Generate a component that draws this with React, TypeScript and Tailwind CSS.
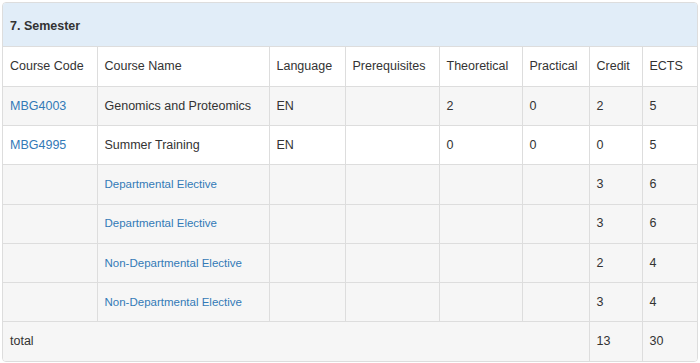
import React from 'react';

interface Course {
  code?: string;
  name: string;
  elective?: boolean;
  lang?: string;
  theo?: string;
  prac?: string;
  credit: string;
  ects: string;
  striped: boolean;
}

const courses: Course[] = [
  { code: 'MBG4003', name: 'Genomics and Proteomics', lang: 'EN', theo: '2', prac: '0', credit: '2', ects: '5', striped: true },
  { code: 'MBG4995', name: 'Summer Training', lang: 'EN', theo: '0', prac: '0', credit: '0', ects: '5', striped: false },
  { name: 'Departmental Elective', elective: true, credit: '3', ects: '6', striped: true },
  { name: 'Departmental Elective', elective: true, credit: '3', ects: '6', striped: true },
  { name: 'Non-Departmental Elective', elective: true, credit: '2', ects: '4', striped: true },
  { name: 'Non-Departmental Elective', elective: true, credit: '3', ects: '4', striped: true },
];

const headers = ['Course Code', 'Course Name', 'Language', 'Prerequisites', 'Theoretical', 'Practical', 'Credit', 'ECTS'];
const widths = ['w-[94px]', 'w-[172px]', 'w-[76px]', 'w-[94px]', 'w-[83px]', 'w-[67px]', 'w-[53px]', 'w-[55px]'];

const cell = 'border border-[#dddddd] px-[7px] h-[39.25px] align-middle';

export default function App() {
  return (
    <div className="p-[2px] bg-white text-[12.5px] text-[#333333] font-['Liberation_Sans',Arial,sans-serif]">
      <div className="border border-[#dddddd] rounded-[4px] overflow-hidden">
        <div className="h-[44px] bg-[#e1edf8] px-[7px] pt-[4px] flex items-center font-bold border-b border-[#dddddd]">
          7. Semester
        </div>
        <table className="w-full border-collapse table-fixed border-hidden">
          <colgroup>
            {widths.map((w, i) => (
              <col key={i} className={w} />
            ))}
          </colgroup>
          <tbody>
            <tr className="bg-white">
              {headers.map((h) => (
                <td key={h} className={cell}>{h}</td>
              ))}
            </tr>
            {courses.map((c, i) => (
              <tr key={i} className={c.striped ? 'bg-[#f6f6f6]' : 'bg-white'}>
                <td className={cell}>
                  {c.code && <span className="text-[#337ab7]">{c.code}</span>}
                </td>
                <td className={cell}>
                  {c.elective ? (
                    <span className="text-[#337ab7] text-[11.5px]">{c.name}</span>
                  ) : (
                    c.name
                  )}
                </td>
                <td className={cell}>{c.lang}</td>
                <td className={cell}></td>
                <td className={cell}>{c.theo}</td>
                <td className={cell}>{c.prac}</td>
                <td className={cell}>{c.credit}</td>
                <td className={cell}>{c.ects}</td>
              </tr>
            ))}
            <tr className="bg-[#f6f6f6]">
              <td className={cell} colSpan={6}>total</td>
              <td className={cell}>13</td>
              <td className={cell}>30</td>
            </tr>
          </tbody>
        </table>
      </div>
    </div>
  );
}
